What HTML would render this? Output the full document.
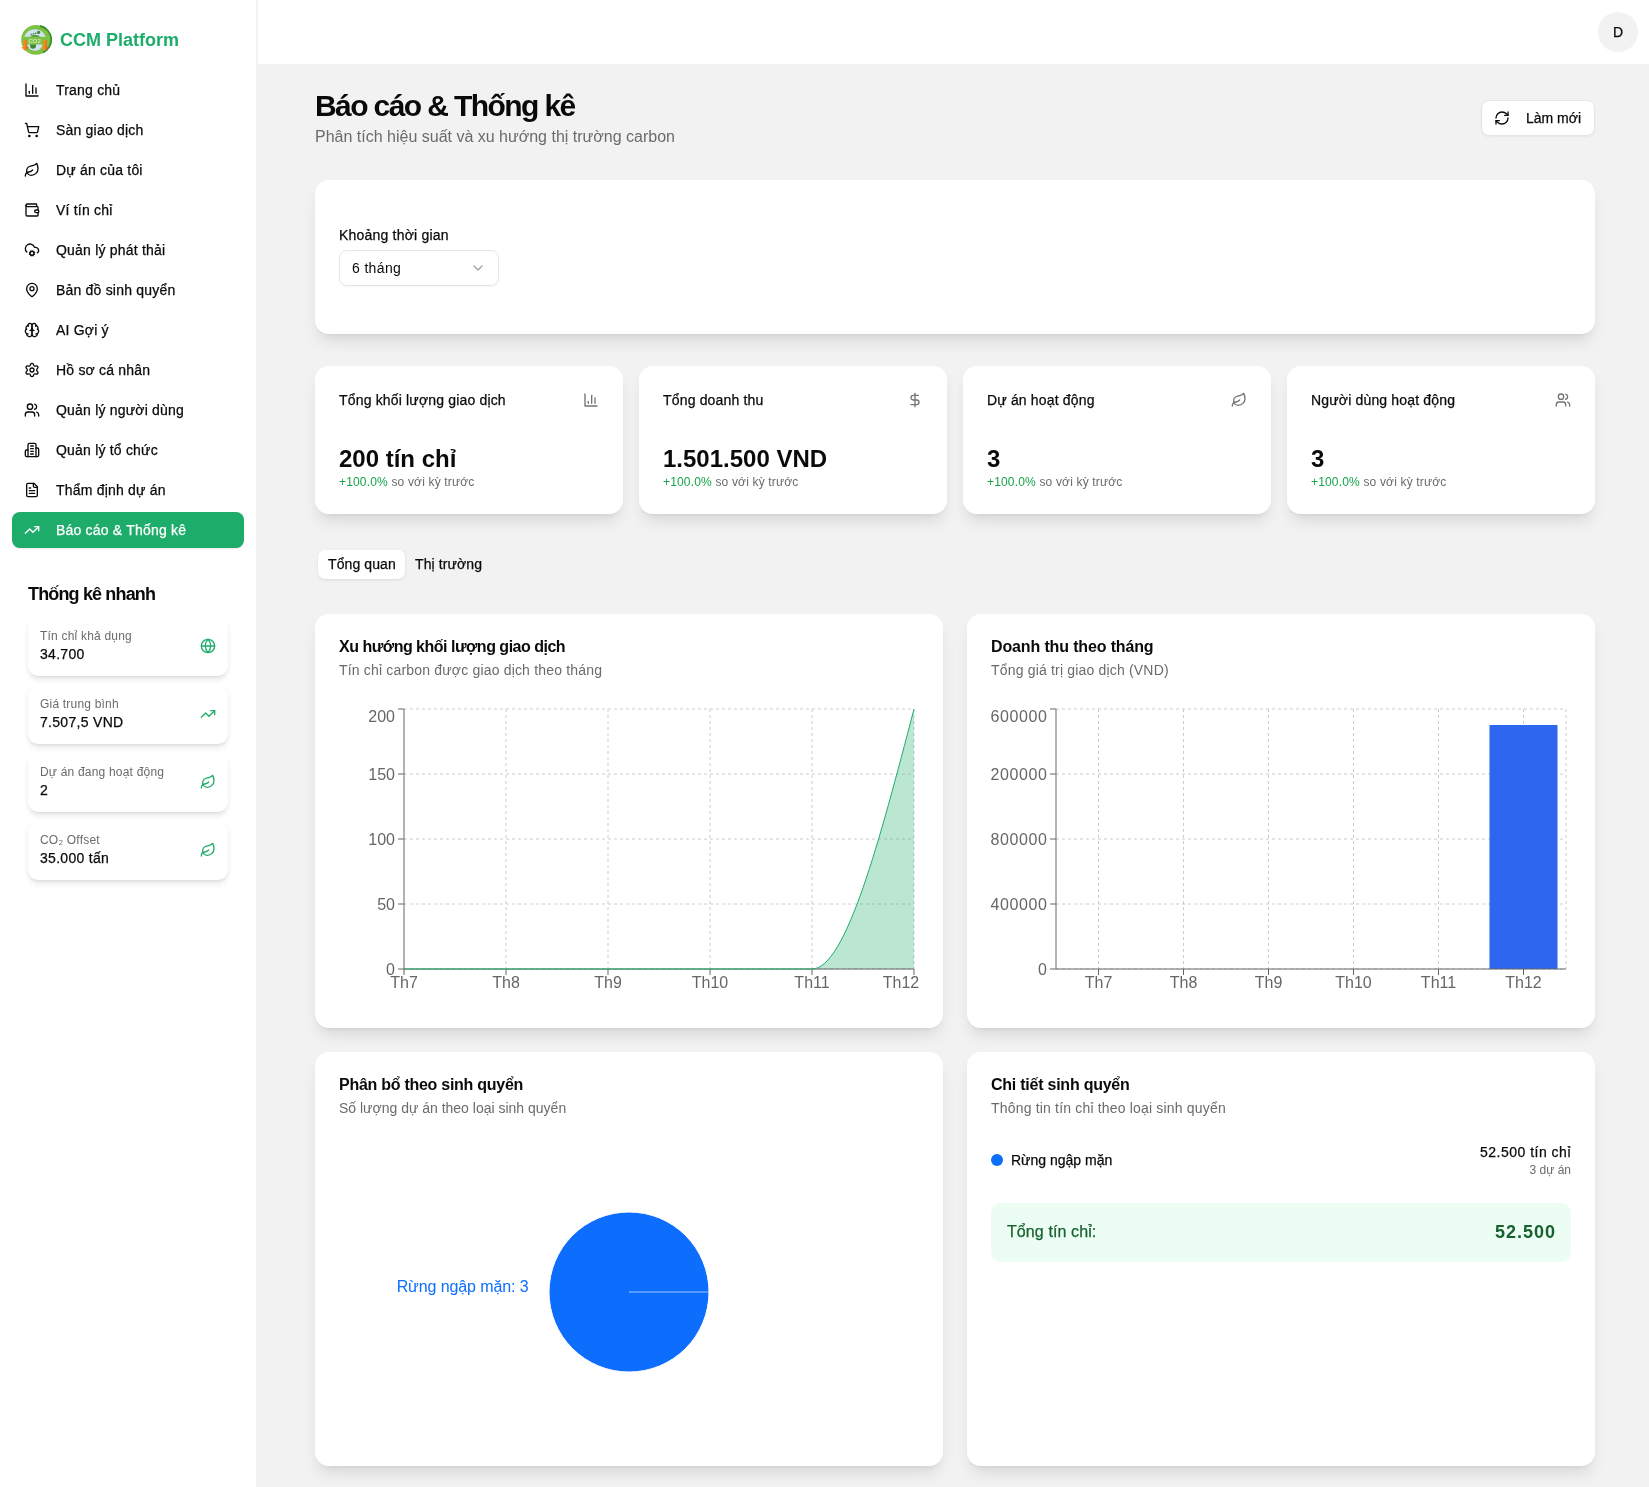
<!DOCTYPE html>
<html lang="vi">
<head>
<meta charset="utf-8">
<title>CCM Platform - Báo cáo &amp; Thống kê</title>
<style>
*{box-sizing:border-box;margin:0;padding:0}
html,body{width:1649px;height:1487px;overflow:hidden}
body{position:relative;background:#f2f2f2;font-family:"Liberation Sans",sans-serif;color:#0a0a0a}
.abs{position:absolute}
svg.i{position:absolute;width:16px;height:16px;fill:none;stroke:currentColor;stroke-width:2;stroke-linecap:round;stroke-linejoin:round}
.t{position:absolute;white-space:nowrap}
.m{-webkit-text-stroke:.25px currentColor}
.sidebar{position:absolute;left:0;top:0;width:256px;height:1487px;background:#fff}
.header{position:absolute;left:258px;top:0;width:1391px;height:64px;background:#fff}
.nav{position:absolute;left:12px;width:232px;height:36px;border-radius:8px;color:#0a0a0a}
.nav svg.i{left:12px;top:10px}
.nav span{position:absolute;left:44px;top:0;line-height:36px;font-size:14px;letter-spacing:.2px;-webkit-text-stroke:.25px currentColor}
.nav.active{background:#1eac6a;color:#fff;box-shadow:0 1px 2px rgba(0,0,0,.08)}
.qs{position:absolute;left:28px;width:200px;height:60px;background:#fff;border-radius:10px;box-shadow:0 4px 6px -1px rgba(0,0,0,.1),0 2px 4px -2px rgba(0,0,0,.1)}
.qs .l{position:absolute;left:12px;top:13px;font-size:12px;color:#6b6b6b;white-space:nowrap;letter-spacing:.2px}
.qs .v{position:absolute;left:12px;top:30px;font-size:14px;color:#0a0a0a;white-space:nowrap;letter-spacing:.3px;-webkit-text-stroke:.25px currentColor}
.qs svg.i{left:172px;top:22px;color:#1eac6a}
.card{position:absolute;background:#fff;border-radius:14px;box-shadow:0 10px 15px -3px rgba(0,0,0,.1),0 4px 6px -4px rgba(0,0,0,.1)}
.stat .lbl{position:absolute;left:24px;top:26px;font-size:14px;white-space:nowrap;letter-spacing:.17px;-webkit-text-stroke:.25px currentColor}
.stat svg.i{left:268px;top:26px;color:#737373}
.stat .val{position:absolute;left:24px;top:79px;font-size:24px;font-weight:bold;white-space:nowrap}
.stat .chg{position:absolute;left:24px;top:109px;font-size:12px;color:#6b6b6b;white-space:nowrap;letter-spacing:.17px}
.stat .chg b{font-weight:normal;color:#16a34a}
.ctitle{position:absolute;left:24px;top:24px;font-size:16px;font-weight:bold;white-space:nowrap}
.csub{position:absolute;left:24px;top:48px;font-size:14px;color:#6b6b6b;white-space:nowrap;letter-spacing:.18px}
</style>
</head>
<body>
<div class="root" style="position:absolute;left:0;top:0;width:1649px;height:1487px;will-change:transform">

<!-- SIDEBAR -->
<div class="sidebar">
  <!-- logo -->
  <svg class="abs" style="left:18px;top:23px;width:36px;height:34px" viewBox="0 0 36 34">
    <defs><linearGradient id="og" x1="0" x2="1" y1="0" y2="0"><stop offset="0" stop-color="#f89a1c"/><stop offset="0.5" stop-color="#f5851e"/><stop offset="1" stop-color="#e6401d"/></linearGradient></defs>
    <circle cx="18.1" cy="16.9" r="14.9" fill="#7dc242"/>
    <path d="M22 3 A14 14 0 0 1 25 29.5" fill="none" stroke="#3c8f2b" stroke-width="1.8"/>
    <path d="M6.2,13.7 A11.45,11.45 0 0 1 27.7,13.7 Z" fill="#d3e2f2"/>
    <path d="M9.2,21.5 A7.94,7.94 0 0 0 24.7,21.5 Z" fill="#d3e2f2"/>
    <path d="M12.8,13.7 Q13,11.9 16,11.9 Q21.7,11.9 21.7,13.7 Z" fill="#3a8a2e"/>
    <circle cx="20.6" cy="9.4" r="1.6" fill="#3a8a2e"/>
    <circle cx="17.6" cy="10.3" r="0.9" fill="#3a8a2e"/>
    <circle cx="15.6" cy="10.7" r="0.8" fill="#3a8a2e"/>
    <circle cx="13.7" cy="11.2" r="0.7" fill="#3a8a2e"/>
    <circle cx="12.2" cy="12" r="0.6" fill="#3a8a2e"/>
    <path d="M12.1,21.5 h5.9 v1.2 a2.95,2.95 0 0 1 -5.9,0 Z" fill="#3a8a2e"/>
    <text x="16.5" y="20.4" font-size="6.2" font-weight="bold" font-family="Liberation Sans" fill="#cfe5bd" text-anchor="middle">CO2</text>
    <path d="M5.3,16.9 H8.7 V24 H10.8 L7,27.9 L3.1,24 H5.3 Z" fill="url(#og)"/>
    <path d="M25.2,16.9 H28.8 V24 H30.9 L27,27.9 L23.1,24 H25.2 Z" fill="url(#og)"/>
  </svg>
  <div class="t" style="left:60px;top:28px;font-size:18px;font-weight:bold;color:#1eac6a;line-height:24px">CCM Platform</div>

  <div class="nav" style="top:72px"><svg class="i" viewBox="0 0 24 24"><path d="M3 3v18h18"/><path d="M18 17V9"/><path d="M13 17V5"/><path d="M8 17v-3"/></svg><span>Trang chủ</span></div>
  <div class="nav" style="top:112px"><svg class="i" viewBox="0 0 24 24"><circle cx="8" cy="21" r="1"/><circle cx="19" cy="21" r="1"/><path d="M2.05 2.05h2l2.66 12.42a2 2 0 0 0 2 1.58h9.78a2 2 0 0 0 1.95-1.57l1.65-7.43H5.12"/></svg><span>Sàn giao dịch</span></div>
  <div class="nav" style="top:152px"><svg class="i" viewBox="0 0 24 24"><path d="M11 20A7 7 0 0 1 9.8 6.1C15.5 5 17 4.48 19 2c1 2 2 4.18 2 8 0 5.5-4.78 10-10 10Z"/><path d="M2 21c0-3 1.85-5.36 5.08-6C9.5 14.52 12 13 13 12"/></svg><span>Dự án của tôi</span></div>
  <div class="nav" style="top:192px"><svg class="i" viewBox="0 0 24 24"><path d="M19 7V4a1 1 0 0 0-1-1H5a2 2 0 0 0 0 4h15a1 1 0 0 1 1 1v4h-3a2 2 0 0 0 0 4h3a1 1 0 0 0 1-1v-2a1 1 0 0 0-1-1"/><path d="M3 5v14a2 2 0 0 0 2 2h15a1 1 0 0 0 1-1v-4"/></svg><span>Ví tín chỉ</span></div>
  <div class="nav" style="top:232px"><svg class="i" viewBox="0 0 24 24"><circle cx="12" cy="17" r="3"/><path d="M4.2 15.1A7 7 0 1 1 15.71 8h1.79a4.5 4.5 0 0 1 2.5 8.2"/><path d="m15.7 18.4-.9-.3"/><path d="m9.2 15.9-.9-.3"/><path d="m10.6 20.7.3-.9"/><path d="m13.1 14.2.3-.9"/><path d="m13.6 20.7-.4-1"/><path d="m10.8 14.3-.4-1"/><path d="m8.3 18.6 1-.4"/><path d="m14.7 15.7 1-.4"/></svg><span>Quản lý phát thải</span></div>
  <div class="nav" style="top:272px"><svg class="i" viewBox="0 0 24 24"><path d="M20 10c0 4.993-5.539 10.193-7.399 11.799a1 1 0 0 1-1.202 0C9.539 20.193 4 14.993 4 10a8 8 0 0 1 16 0"/><circle cx="12" cy="10" r="3"/></svg><span>Bản đồ sinh quyển</span></div>
  <div class="nav" style="top:312px"><svg class="i" viewBox="0 0 24 24"><path d="M12 5a3 3 0 1 0-5.997.125 4 4 0 0 0-2.526 5.77 4 4 0 0 0 .556 6.588A4 4 0 1 0 12 18Z"/><path d="M12 5a3 3 0 1 1 5.997.125 4 4 0 0 1 2.526 5.77 4 4 0 0 1-.556 6.588A4 4 0 1 1 12 18Z"/><path d="M15 13a4.5 4.5 0 0 1-3-4 4.5 4.5 0 0 1-3 4"/><path d="M17.599 6.5a3 3 0 0 0 .399-1.375"/><path d="M6.003 5.125A3 3 0 0 0 6.401 6.5"/><path d="M3.477 10.896a4 4 0 0 1 .585-.396"/><path d="M19.938 10.5a4 4 0 0 1 .585.396"/><path d="M6 18a4 4 0 0 1-1.967-.516"/><path d="M19.967 17.484A4 4 0 0 1 18 18"/></svg><span>AI Gợi ý</span></div>
  <div class="nav" style="top:352px"><svg class="i" viewBox="0 0 24 24"><path d="M9.671 4.136a2.34 2.34 0 0 1 4.659 0 2.34 2.34 0 0 0 3.319 1.915 2.34 2.34 0 0 1 2.33 4.033 2.34 2.34 0 0 0 0 3.831 2.34 2.34 0 0 1-2.33 4.033 2.34 2.34 0 0 0-3.319 1.915 2.34 2.34 0 0 1-4.659 0 2.34 2.34 0 0 0-3.32-1.915 2.34 2.34 0 0 1-2.33-4.033 2.34 2.34 0 0 0 0-3.831A2.34 2.34 0 0 1 6.35 6.051a2.34 2.34 0 0 0 3.319-1.915"/><circle cx="12" cy="12" r="3"/></svg><span>Hồ sơ cá nhân</span></div>
  <div class="nav" style="top:392px"><svg class="i" viewBox="0 0 24 24"><path d="M16 21v-2a4 4 0 0 0-4-4H6a4 4 0 0 0-4 4v2"/><path d="M16 3.128a4 4 0 0 1 0 7.744"/><path d="M22 21v-2a4 4 0 0 0-3-3.87"/><circle cx="9" cy="7" r="4"/></svg><span>Quản lý người dùng</span></div>
  <div class="nav" style="top:432px"><svg class="i" viewBox="0 0 24 24"><path d="M6 22V4a2 2 0 0 1 2-2h8a2 2 0 0 1 2 2v18Z"/><path d="M6 12H4a2 2 0 0 0-2 2v6a2 2 0 0 0 2 2h2"/><path d="M18 9h2a2 2 0 0 1 2 2v9a2 2 0 0 1-2 2h-2"/><path d="M10 6h4"/><path d="M10 10h4"/><path d="M10 14h4"/><path d="M10 18h4"/></svg><span>Quản lý tổ chức</span></div>
  <div class="nav" style="top:472px"><svg class="i" viewBox="0 0 24 24"><path d="M15 2H6a2 2 0 0 0-2 2v16a2 2 0 0 0 2 2h12a2 2 0 0 0 2-2V7Z"/><path d="M14 2v4a2 2 0 0 0 2 2h4"/><path d="M10 9H8"/><path d="M16 13H8"/><path d="M16 17H8"/></svg><span>Thẩm định dự án</span></div>
  <div class="nav active" style="top:512px"><svg class="i" viewBox="0 0 24 24"><polyline points="22 7 13.5 15.5 8.5 10.5 2 17"/><polyline points="16 7 22 7 22 13"/></svg><span>Báo cáo &amp; Thống kê</span></div>

  <div class="t" style="left:28px;top:582px;font-size:18px;font-weight:bold;line-height:24px;letter-spacing:-.85px">Thống kê nhanh</div>

  <div class="qs" style="top:616px"><div class="l">Tín chỉ khả dụng</div><div class="v">34.700</div><svg class="i" viewBox="0 0 24 24"><circle cx="12" cy="12" r="10"/><path d="M12 2a14.5 14.5 0 0 0 0 20 14.5 14.5 0 0 0 0-20"/><path d="M2 12h20"/></svg></div>
  <div class="qs" style="top:684px"><div class="l">Giá trung bình</div><div class="v">7.507,5 VND</div><svg class="i" viewBox="0 0 24 24"><polyline points="22 7 13.5 15.5 8.5 10.5 2 17"/><polyline points="16 7 22 7 22 13"/></svg></div>
  <div class="qs" style="top:752px"><div class="l">Dự án đang hoạt động</div><div class="v">2</div><svg class="i" viewBox="0 0 24 24"><path d="M11 20A7 7 0 0 1 9.8 6.1C15.5 5 17 4.48 19 2c1 2 2 4.18 2 8 0 5.5-4.78 10-10 10Z"/><path d="M2 21c0-3 1.85-5.36 5.08-6C9.5 14.52 12 13 13 12"/></svg></div>
  <div class="qs" style="top:820px"><div class="l">CO₂ Offset</div><div class="v">35.000 tấn</div><svg class="i" viewBox="0 0 24 24"><path d="M11 20A7 7 0 0 1 9.8 6.1C15.5 5 17 4.48 19 2c1 2 2 4.18 2 8 0 5.5-4.78 10-10 10Z"/><path d="M2 21c0-3 1.85-5.36 5.08-6C9.5 14.52 12 13 13 12"/></svg></div>
</div>

<!-- HEADER -->
<div class="header">
  <div class="abs" style="left:1340px;top:12px;width:40px;height:40px;border-radius:50%;background:#f2f2f2;text-align:center;line-height:40px;font-size:14px;-webkit-text-stroke:.25px currentColor">D</div>
</div>

<!-- MAIN -->
<!-- page title -->
<div class="t" style="left:315px;top:88px;font-size:30px;font-weight:bold;line-height:36px;letter-spacing:-1.6px">Báo cáo &amp; Thống kê</div>
<div class="t" style="left:315px;top:125px;font-size:16px;line-height:24px;color:#6b6b6b">Phân tích hiệu suất và xu hướng thị trường carbon</div>
<div class="abs" style="left:1481px;top:100px;width:114px;height:36px;background:#fff;border:1px solid #e5e5e5;border-radius:8px;box-shadow:0 1px 2px rgba(0,0,0,.05)">
  <svg class="i" style="left:12px;top:9px" viewBox="0 0 24 24"><path d="M3 12a9 9 0 0 1 9-9 9.75 9.75 0 0 1 6.74 2.74L21 8"/><path d="M21 3v5h-5"/><path d="M21 12a9 9 0 0 1-9 9 9.75 9.75 0 0 1-6.74-2.74L3 16"/><path d="M8 16H3v5"/></svg>
  <div class="t m" style="left:44px;top:0;line-height:34px;font-size:14px">Làm mới</div>
</div>

<!-- filter card -->
<div class="card" style="left:315px;top:180px;width:1280px;height:154px">
  <div class="t m" style="left:24px;top:46px;font-size:14px;line-height:18px;letter-spacing:.2px">Khoảng thời gian</div>
  <div class="abs" style="left:24px;top:70px;width:160px;height:36px;border:1px solid #e5e5e5;border-radius:8px;box-shadow:0 1px 2px rgba(0,0,0,.05)">
    <div class="t" style="left:12px;top:0;line-height:34px;font-size:14px;letter-spacing:.35px">6 tháng</div>
    <svg class="i" style="left:130px;top:9px;color:#a3a3a3" viewBox="0 0 24 24"><path d="m6 9 6 6 6-6"/></svg>
  </div>
</div>

<!-- stat cards -->
<div class="card stat" style="left:315px;top:366px;width:308px;height:148px">
  <div class="lbl">Tổng khối lượng giao dịch</div>
  <svg class="i" viewBox="0 0 24 24"><path d="M3 3v18h18"/><path d="M18 17V9"/><path d="M13 17V5"/><path d="M8 17v-3"/></svg>
  <div class="val">200 tín chỉ</div>
  <div class="chg"><b>+100.0%</b> so với kỳ trước</div>
</div>
<div class="card stat" style="left:639px;top:366px;width:308px;height:148px">
  <div class="lbl">Tổng doanh thu</div>
  <svg class="i" viewBox="0 0 24 24"><line x1="12" x2="12" y1="2" y2="22"/><path d="M17 5H9.5a3.5 3.5 0 0 0 0 7h5a3.5 3.5 0 0 1 0 7H6"/></svg>
  <div class="val">1.501.500 VND</div>
  <div class="chg"><b>+100.0%</b> so với kỳ trước</div>
</div>
<div class="card stat" style="left:963px;top:366px;width:308px;height:148px">
  <div class="lbl">Dự án hoạt động</div>
  <svg class="i" viewBox="0 0 24 24"><path d="M11 20A7 7 0 0 1 9.8 6.1C15.5 5 17 4.48 19 2c1 2 2 4.18 2 8 0 5.5-4.78 10-10 10Z"/><path d="M2 21c0-3 1.85-5.36 5.08-6C9.5 14.52 12 13 13 12"/></svg>
  <div class="val">3</div>
  <div class="chg"><b>+100.0%</b> so với kỳ trước</div>
</div>
<div class="card stat" style="left:1287px;top:366px;width:308px;height:148px">
  <div class="lbl">Người dùng hoạt động</div>
  <svg class="i" viewBox="0 0 24 24"><path d="M16 21v-2a4 4 0 0 0-4-4H6a4 4 0 0 0-4 4v2"/><path d="M16 3.128a4 4 0 0 1 0 7.744"/><path d="M22 21v-2a4 4 0 0 0-3-3.87"/><circle cx="9" cy="7" r="4"/></svg>
  <div class="val">3</div>
  <div class="chg"><b>+100.0%</b> so với kỳ trước</div>
</div>

<!-- tabs -->
<div class="abs" style="left:318px;top:550px;width:87px;height:29px;background:#fff;border-radius:7px;box-shadow:0 1px 3px rgba(0,0,0,.1)"></div>
<div class="t m" style="left:328px;top:550px;line-height:29px;font-size:14px;letter-spacing:.1px">Tổng quan</div>
<div class="t m" style="left:415px;top:550px;line-height:29px;font-size:14px;letter-spacing:.1px">Thị trường</div>

<!-- chart card 1 -->
<div class="card" style="left:315px;top:614px;width:628px;height:414px">
  <div class="ctitle" style="letter-spacing:-.5px">Xu hướng khối lượng giao dịch</div>
  <div class="csub">Tín chỉ carbon được giao dịch theo tháng</div>
</div>
<svg class="abs" style="left:315px;top:614px;width:628px;height:414px;overflow:visible" viewBox="315 614 628 414">
  <g stroke="#ccc" stroke-dasharray="3 3" fill="none">
    <line x1="404" y1="709" x2="914" y2="709"/>
    <line x1="404" y1="774" x2="914" y2="774"/>
    <line x1="404" y1="839" x2="914" y2="839"/>
    <line x1="404" y1="904" x2="914" y2="904"/>
    <line x1="404" y1="969" x2="914" y2="969"/>
    <line x1="506" y1="709" x2="506" y2="969"/>
    <line x1="608" y1="709" x2="608" y2="969"/>
    <line x1="710" y1="709" x2="710" y2="969"/>
    <line x1="812" y1="709" x2="812" y2="969"/>
    <line x1="914" y1="709" x2="914" y2="969"/>
  </g>
  <path d="M404,969 L812,969 C846,969 880,839 914,709 L914,969 Z" fill="#1eac6a" fill-opacity="0.3"/>
  <g stroke="#666" fill="none">
    <line x1="404" y1="709" x2="404" y2="969"/>
    <line x1="398" y1="709" x2="404" y2="709"/>
    <line x1="398" y1="774" x2="404" y2="774"/>
    <line x1="398" y1="839" x2="404" y2="839"/>
    <line x1="398" y1="904" x2="404" y2="904"/>
    <line x1="398" y1="969" x2="404" y2="969"/>
    <line x1="404" y1="969" x2="914" y2="969"/>
    <line x1="404" y1="969" x2="404" y2="975"/>
    <line x1="506" y1="969" x2="506" y2="975"/>
    <line x1="608" y1="969" x2="608" y2="975"/>
    <line x1="710" y1="969" x2="710" y2="975"/>
    <line x1="812" y1="969" x2="812" y2="975"/>
    <line x1="914" y1="969" x2="914" y2="975"/>
  </g>
  <path d="M404,969 L812,969 C846,969 880,839 914,709" fill="none" stroke="#1eac6a" stroke-width="1"/>
  <g font-family="Liberation Sans" font-size="16" fill="#666" text-anchor="end">
    <text x="395" y="722">200</text>
    <text x="395" y="780">150</text>
    <text x="395" y="845">100</text>
    <text x="395" y="910">50</text>
    <text x="395" y="975">0</text>
  </g>
  <g font-family="Liberation Sans" font-size="16" fill="#666" text-anchor="middle">
    <text x="404" y="988">Th7</text>
    <text x="506" y="988">Th8</text>
    <text x="608" y="988">Th9</text>
    <text x="710" y="988">Th10</text>
    <text x="812" y="988">Th11</text>
    <text x="901" y="988">Th12</text>
  </g>
</svg>

<!-- chart card 2 -->
<div class="card" style="left:967px;top:614px;width:628px;height:414px">
  <div class="ctitle" style="letter-spacing:-.14px">Doanh thu theo tháng</div>
  <div class="csub">Tổng giá trị giao dịch (VND)</div>
</div>
<svg class="abs" style="left:967px;top:614px;width:628px;height:414px;overflow:visible" viewBox="967 614 628 414">
  <g stroke="#ccc" stroke-dasharray="3 3" fill="none">
    <line x1="1056" y1="709" x2="1566" y2="709"/>
    <line x1="1056" y1="774" x2="1566" y2="774"/>
    <line x1="1056" y1="839" x2="1566" y2="839"/>
    <line x1="1056" y1="904" x2="1566" y2="904"/>
    <line x1="1056" y1="969" x2="1566" y2="969"/>
    <line x1="1098.5" y1="709" x2="1098.5" y2="969"/>
    <line x1="1183.5" y1="709" x2="1183.5" y2="969"/>
    <line x1="1268.5" y1="709" x2="1268.5" y2="969"/>
    <line x1="1353.5" y1="709" x2="1353.5" y2="969"/>
    <line x1="1438.5" y1="709" x2="1438.5" y2="969"/>
    <line x1="1523.5" y1="709" x2="1523.5" y2="969"/>
    <line x1="1566" y1="709" x2="1566" y2="969"/>
  </g>
  <rect x="1489.5" y="725" width="68" height="244" fill="#2f66ef"/>
  <g stroke="#666" fill="none">
    <line x1="1056" y1="709" x2="1056" y2="969"/>
    <line x1="1050" y1="709" x2="1056" y2="709"/>
    <line x1="1050" y1="774" x2="1056" y2="774"/>
    <line x1="1050" y1="839" x2="1056" y2="839"/>
    <line x1="1050" y1="904" x2="1056" y2="904"/>
    <line x1="1050" y1="969" x2="1056" y2="969"/>
    <line x1="1056" y1="969" x2="1566" y2="969"/>
    <line x1="1098.5" y1="969" x2="1098.5" y2="975"/>
    <line x1="1183.5" y1="969" x2="1183.5" y2="975"/>
    <line x1="1268.5" y1="969" x2="1268.5" y2="975"/>
    <line x1="1353.5" y1="969" x2="1353.5" y2="975"/>
    <line x1="1438.5" y1="969" x2="1438.5" y2="975"/>
    <line x1="1523.5" y1="969" x2="1523.5" y2="975"/>
  </g>
  <g font-family="Liberation Sans" font-size="16" fill="#666" text-anchor="end" letter-spacing="0.6">
    <text x="1047.5" y="722">600000</text>
    <text x="1047.5" y="780">200000</text>
    <text x="1047.5" y="845">800000</text>
    <text x="1047.5" y="910">400000</text>
    <text x="1047.5" y="975">0</text>
  </g>
  <g font-family="Liberation Sans" font-size="16" fill="#666" text-anchor="middle">
    <text x="1098.5" y="988">Th7</text>
    <text x="1183.5" y="988">Th8</text>
    <text x="1268.5" y="988">Th9</text>
    <text x="1353.5" y="988">Th10</text>
    <text x="1438.5" y="988">Th11</text>
    <text x="1523.5" y="988">Th12</text>
  </g>
</svg>

<!-- pie card -->
<div class="card" style="left:315px;top:1052px;width:628px;height:414px">
  <div class="ctitle" style="letter-spacing:-.27px">Phân bổ theo sinh quyển</div>
  <div class="csub" style="letter-spacing:0">Số lượng dự án theo loại sinh quyển</div>
</div>
<svg class="abs" style="left:315px;top:1052px;width:628px;height:414px;overflow:visible" viewBox="315 1052 628 414">
  <circle cx="629" cy="1292" r="80" fill="#0d6efd" stroke="#fff" stroke-width="1"/>
  <line x1="629" y1="1292" x2="709" y2="1292" stroke="#fff" stroke-opacity="0.6"/>
  <text x="528.5" y="1292" font-family="Liberation Sans" font-size="16" fill="#0d6efd" text-anchor="end" letter-spacing="-0.1">Rừng ngập mặn: 3</text>
</svg>

<!-- detail card -->
<div class="card" style="left:967px;top:1052px;width:628px;height:414px">
  <div class="ctitle" style="letter-spacing:-.24px">Chi tiết sinh quyển</div>
  <div class="csub">Thông tin tín chỉ theo loại sinh quyển</div>
  <div class="abs" style="left:24px;top:102px;width:12px;height:12px;border-radius:50%;background:#0d6efd"></div>
  <div class="t m" style="left:44px;top:99px;font-size:14px;line-height:18px">Rừng ngập mặn</div>
  <div class="t m" style="right:24px;top:91px;font-size:14px;line-height:18px;text-align:right;letter-spacing:.5px">52.500 tín chỉ</div>
  <div class="t" style="right:24px;top:110px;font-size:12px;line-height:16px;color:#6b6b6b;text-align:right">3 dự án</div>
  <div class="abs" style="left:24px;top:151px;width:580px;height:59px;border-radius:10px;background:#ecfdf3">
    <div class="t m" style="left:16px;top:-1px;line-height:59px;font-size:16px;color:#17612f;letter-spacing:.1px">Tổng tín chỉ:</div>
    <div class="t" style="right:15px;top:0;line-height:59px;font-size:18px;font-weight:bold;color:#17612f;letter-spacing:1px">52.500</div>
  </div>
</div>


</div>
</body>
</html>
